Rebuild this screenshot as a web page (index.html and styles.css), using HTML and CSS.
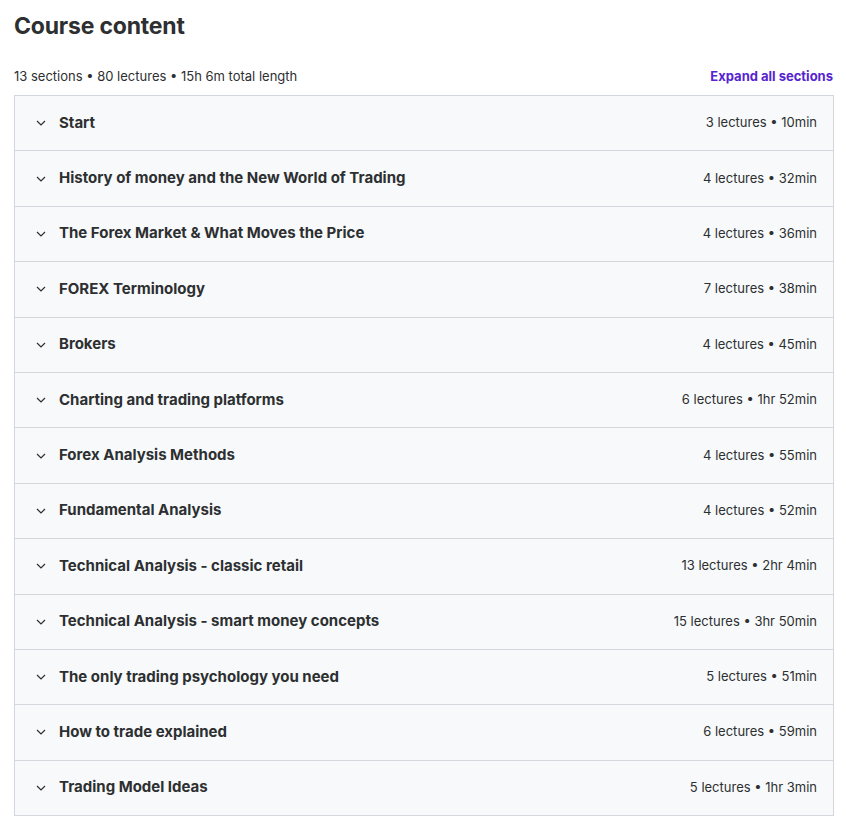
FILE: index.html
```html
<!DOCTYPE html>
<html lang="en">
<head>
<meta charset="utf-8">
<title>Course content</title>
<link rel="stylesheet" href="styles.css">
</head>
<body>
<div class="page">
  <h2 class="title">Course content</h2>
  <div class="summary">
    <span class="summary-text">13 sections • 80 lectures • 15h 6m total length</span>
    <button class="expand">Expand all sections</button>
  </div>
  <div class="accordion">
    <div class="row"><span class="left"><svg class="chev" viewBox="0 0 10 6"><path d="M1 1l4 4 4-4"/></svg><span class="name">Start</span></span><span class="meta">3 lectures • 10min</span></div>
    <div class="row"><span class="left"><svg class="chev" viewBox="0 0 10 6"><path d="M1 1l4 4 4-4"/></svg><span class="name">History of money and the New World of Trading</span></span><span class="meta">4 lectures • 32min</span></div>
    <div class="row"><span class="left"><svg class="chev" viewBox="0 0 10 6"><path d="M1 1l4 4 4-4"/></svg><span class="name">The Forex Market &amp; What Moves the Price</span></span><span class="meta">4 lectures • 36min</span></div>
    <div class="row"><span class="left"><svg class="chev" viewBox="0 0 10 6"><path d="M1 1l4 4 4-4"/></svg><span class="name">FOREX Terminology</span></span><span class="meta">7 lectures • 38min</span></div>
    <div class="row"><span class="left"><svg class="chev" viewBox="0 0 10 6"><path d="M1 1l4 4 4-4"/></svg><span class="name">Brokers</span></span><span class="meta">4 lectures • 45min</span></div>
    <div class="row"><span class="left"><svg class="chev" viewBox="0 0 10 6"><path d="M1 1l4 4 4-4"/></svg><span class="name">Charting and trading platforms</span></span><span class="meta">6 lectures • 1hr 52min</span></div>
    <div class="row"><span class="left"><svg class="chev" viewBox="0 0 10 6"><path d="M1 1l4 4 4-4"/></svg><span class="name">Forex Analysis Methods</span></span><span class="meta">4 lectures • 55min</span></div>
    <div class="row"><span class="left"><svg class="chev" viewBox="0 0 10 6"><path d="M1 1l4 4 4-4"/></svg><span class="name">Fundamental Analysis</span></span><span class="meta">4 lectures • 52min</span></div>
    <div class="row"><span class="left"><svg class="chev" viewBox="0 0 10 6"><path d="M1 1l4 4 4-4"/></svg><span class="name">Technical Analysis - classic retail</span></span><span class="meta">13 lectures • 2hr 4min</span></div>
    <div class="row"><span class="left"><svg class="chev" viewBox="0 0 10 6"><path d="M1 1l4 4 4-4"/></svg><span class="name">Technical Analysis - smart money concepts</span></span><span class="meta">15 lectures • 3hr 50min</span></div>
    <div class="row"><span class="left"><svg class="chev" viewBox="0 0 10 6"><path d="M1 1l4 4 4-4"/></svg><span class="name">The only trading psychology you need</span></span><span class="meta">5 lectures • 51min</span></div>
    <div class="row"><span class="left"><svg class="chev" viewBox="0 0 10 6"><path d="M1 1l4 4 4-4"/></svg><span class="name">How to trade explained</span></span><span class="meta">6 lectures • 59min</span></div>
    <div class="row"><span class="left"><svg class="chev" viewBox="0 0 10 6"><path d="M1 1l4 4 4-4"/></svg><span class="name">Trading Model Ideas</span></span><span class="meta">5 lectures • 1hr 3min</span></div>
  </div>
</div>
</body>
</html>
```

FILE: styles.css
```css
* { box-sizing: border-box; }
html, body { margin: 0; padding: 0; background: #ffffff; }
body {
  font-family: "Inter", "Noto Sans", "Liberation Sans", sans-serif;
  color: #2d2f31;
}
.page {
  padding: 11px 13px 0 14px;
}
.title {
  margin: 0;
  font-size: 23px;
  font-weight: 700;
  line-height: 30px;
  letter-spacing: -0.2px;
}
.summary {
  display: flex;
  justify-content: space-between;
  align-items: center;
  margin-top: 20px;
  height: 34px;
  padding-bottom: 5px;
}
.summary-text {
  font-size: 13px;
}
.expand {
  border: 0;
  background: none;
  padding: 0;
  font-family: inherit;
  font-size: 13px;
  font-weight: 700;
  color: #5624d0;
  cursor: pointer;
}
.accordion {
  width: 820px;
  border: 1px solid #d1d7dc;
  border-bottom: 0;
}
.row {
  display: flex;
  justify-content: space-between;
  align-items: center;
  height: 55.4px;
  padding: 0 16px 2px 21px;
  background: #f7f9fa;
  border-bottom: 1px solid #d1d7dc;
}
.left {
  display: flex;
  align-items: center;
}
.chev {
  width: 10px;
  height: 6px;
  fill: none;
  stroke: #2d2f31;
  stroke-width: 1.2;
  margin-right: 13px;
  margin-top: 2px;
}
.name {
  font-size: 15px;
  font-weight: 700;
}
.meta {
  font-size: 13px;
}
```
